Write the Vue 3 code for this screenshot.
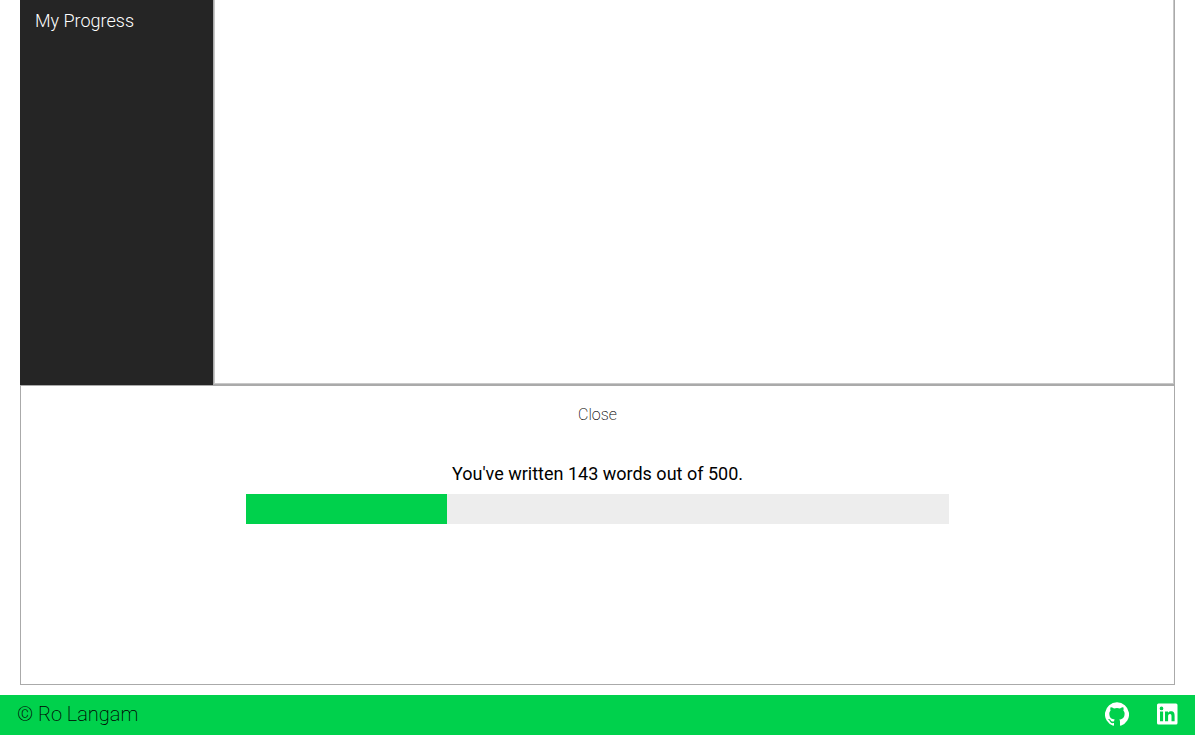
<script setup>
import { ref, computed } from 'vue'

const written = ref(143)
const goal = ref(500)
const draft = ref('')
const panelOpen = ref(true)
const percent = computed(() => Math.min(100, (written.value / goal.value) * 100))
</script>

<template>
  <div class="page">
    <main class="content">
      <div class="workspace">
        <nav class="sidebar">
          <button type="button" class="nav-item" @click="panelOpen = true">My Progress</button>
        </nav>
        <div class="editor">
          <textarea v-model="draft" class="draft" aria-label="Draft"></textarea>
        </div>
      </div>
      <section v-if="panelOpen" class="panel">
        <button type="button" class="close" @click="panelOpen = false">Close</button>
        <p id="progress-label" class="message">You've written {{ written }} words out of {{ goal }}.</p>
        <div
          class="track"
          role="progressbar"
          aria-labelledby="progress-label"
          aria-valuemin="0"
          :aria-valuemax="goal"
          :aria-valuenow="written"
        >
          <div class="fill" :style="{ width: percent + '%' }"></div>
        </div>
      </section>
    </main>
    <footer class="footer">
      <span class="copyright">© Ro Langam</span>
      <div class="links">
        <a href="#github" aria-label="GitHub">
          <svg viewBox="0 0 24 24" width="24" height="24" fill="#fff" aria-hidden="true">
            <path d="M12 .3a12 12 0 0 0-3.8 23.4c.6.1.8-.3.8-.6v-2c-3.3.7-4-1.6-4-1.6-.6-1.4-1.4-1.8-1.4-1.8-1-.7.1-.7.1-.7 1.2 0 1.9 1.2 1.9 1.2 1 1.8 2.8 1.3 3.5 1 0-.8.4-1.3.7-1.6-2.7-.3-5.5-1.3-5.5-6 0-1.2.5-2.3 1.3-3.1-.2-.4-.6-1.6 0-3.2 0 0 1-.3 3.4 1.2a11.5 11.5 0 0 1 6 0c2.3-1.5 3.3-1.2 3.3-1.2.6 1.6.2 2.8 0 3.2.9.8 1.3 1.9 1.3 3.2 0 4.6-2.8 5.6-5.5 5.9.5.4.9 1 .9 2.2v3.3c0 .3.1.7.8.6A12 12 0 0 0 12 .3" />
          </svg>
        </a>
        <a href="#linkedin" aria-label="LinkedIn">
          <svg viewBox="0 0 22 22" width="22" height="22" fill="#fff" aria-hidden="true">
            <path fill-rule="evenodd" d="M2.500.5h17.500a1.500 1.500 0 0 1 1.500 1.500v18a1.500 1.500 0 0 1-1.500 1.500H2.500A1.500 1.500 0 0 1 1 20V2A1.500 1.500 0 0 1 2.500.5ZM4 8.500v9.800h3.100V8.500ZM5.500 3.600a1.850 1.850 0 1 0 0 3.700a1.850 1.850 0 1 0 0-3.700ZM9 8.500v9.800h3.100v-4.900c0-1.300.4-2.400 1.900-2.400 1.400 0 1.500 1.200 1.500 2.500v4.800h3.100v-5.400c0-2.700-.6-4.600-3.700-4.600-1.400 0-2.400.7-2.900 1.500V8.500Z" />
          </svg>
        </a>
      </div>
    </footer>
  </div>
</template>

<style>
body {
  background: #fff;
}
</style>

<style scoped>
.page {
  display: flex;
  flex-direction: column;
  min-height: 100vh;
  font-family: Roboto, sans-serif;
  color: #000;
}

.page * {
  box-sizing: border-box;
}

button {
  padding: 0;
  border: 0;
  background: none;
  font-family: inherit;
  cursor: pointer;
}

.content {
  display: flex;
  flex: 1;
  flex-direction: column;
  margin: 0 20px 10px;
}

.workspace {
  display: flex;
  flex: 1;
}

.sidebar {
  flex: 0 0 193px;
  padding: 10px 15px;
  background: #252525;
}

.nav-item {
  display: block;
  color: #fff;
  font-size: 18px;
  font-weight: 300;
  line-height: 21px;
}

.editor {
  display: flex;
  flex: 1;
  border: solid #aaa;
  border-width: 0 1px 1px;
}

.draft {
  flex: 1;
  padding: 10px;
  border: solid #c8c8c8;
  border-width: 0 1px 1px;
  outline: 0;
  background: #fff;
  font: inherit;
  resize: none;
}

.panel {
  display: flex;
  flex-direction: column;
  align-items: center;
  min-height: 300px;
  padding: 18px 0;
  border: 1px solid #aaa;
}

.close {
  color: #000;
  font-size: 16px;
  font-weight: 200;
  line-height: 22px;
}

.message {
  margin: 38px 0 10px;
  font-size: 18px;
  line-height: 20px;
}

.track {
  width: 61%;
  height: 30px;
  background: #ededed;
}

.fill {
  height: 100%;
  background: #00d14c;
}

.footer {
  display: flex;
  align-items: center;
  justify-content: space-between;
  height: 40px;
  padding: 0 17px 2px;
  background: #00d14c;
}

.copyright {
  font-size: 20px;
  font-weight: 200;
  line-height: 24px;
}

.links {
  display: flex;
  align-items: center;
  gap: 27px;
}

.links a,
.links svg {
  display: block;
}
</style>
